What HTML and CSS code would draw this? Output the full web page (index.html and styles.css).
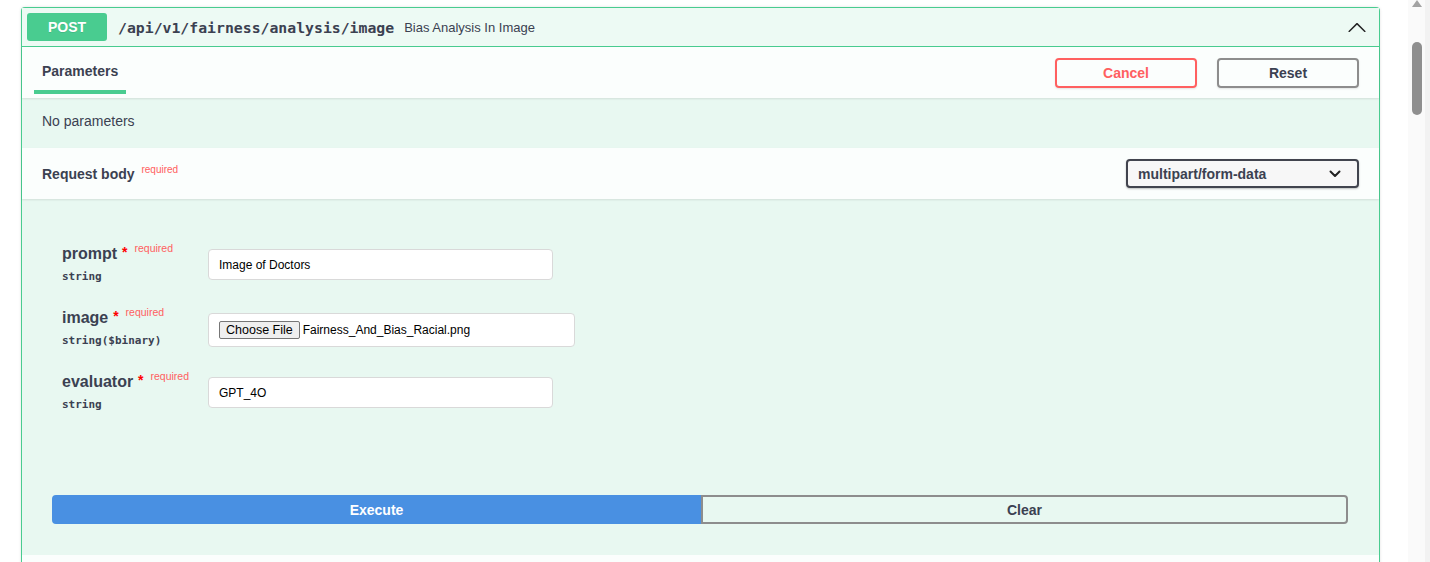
FILE: index.html
```html
<!DOCTYPE html>
<html>
<head>
<meta charset="utf-8">
<link rel="stylesheet" href="styles.css">
</head>
<body>
<div class="page">
  <div class="main">
    <div class="opblock">
      <div class="summary">
        <span class="method">POST</span>
        <span class="path">/api/v1/fairness/analysis/image</span>
        <span class="desc">Bias Analysis In Image</span>
        <svg class="arrow" width="20" height="20" viewBox="0 0 20 20"><path d="M17.418 14.908C17.69 15.176 18.127 15.176 18.397 14.908C18.667 14.64 18.668 14.207 18.397 13.939L10.489 6.109C10.219 5.841 9.782 5.841 9.51 6.109L1.602 13.939C1.332 14.207 1.332 14.64 1.602 14.908C1.873 15.176 2.311 15.176 2.581 14.908L10 7.767L17.418 14.908Z" fill="#222"/></svg>
      </div>
      <div class="section-header params-header">
        <div class="tab"><span class="tab-label">Parameters</span></div>
        <div class="btn-group">
          <button class="btn cancel">Cancel</button>
          <button class="btn reset">Reset</button>
        </div>
      </div>
      <div class="no-params">No parameters</div>
      <div class="section-header body-header">
        <div class="rb-title">Request body <sup class="req">required</sup></div>
        <div class="select">
          <span>multipart/form-data</span>
          <svg width="12" height="8" viewBox="0 0 12 8"><path d="M1.5 1.5 L6 6 L10.5 1.5" fill="none" stroke="#222" stroke-width="2" stroke-linecap="round" stroke-linejoin="round"/></svg>
        </div>
      </div>
      <div class="body-section">
        <div class="fields">
          <div class="field">
            <div class="label">
              <div class="name">prompt<span class="star"> *</span><sup class="req">required</sup></div>
              <div class="type">string</div>
            </div>
            <div class="input">Image of Doctors</div>
          </div>
          <div class="field">
            <div class="label">
              <div class="name">image<span class="star"> *</span><sup class="req">required</sup></div>
              <div class="type">string($binary)</div>
            </div>
            <div class="input file"><span class="choose">Choose File</span><span class="fname">Fairness_And_Bias_Racial.png</span></div>
          </div>
          <div class="field">
            <div class="label">
              <div class="name">evaluator<span class="star"> *</span><sup class="req">required</sup></div>
              <div class="type">string</div>
            </div>
            <div class="input">GPT_4O</div>
          </div>
        </div>
        <div class="exec-row">
          <button class="execute">Execute</button>
          <button class="clear">Clear</button>
        </div>
      </div>
      <div class="bottom"></div>
    </div>
  </div>
  <div class="scrollbar">
    <div class="up"></div>
    <div class="thumb"></div>
  </div>
</div>
</body>
</html>
```
FILE: styles.css
```css
* { box-sizing: border-box; }
html, body { margin: 0; padding: 0; background: #fff; }
body {
  font-family: "Liberation Sans", Arial, sans-serif;
  color: #3b4151;
  width: 1430px;
  height: 562px;
  overflow: hidden;
}
.page { display: flex; height: 562px; }
.main { width: 1408px; padding: 7px 0 0 21px; }
.opblock {
  width: 1359px;
  border: 1px solid #49cc90;
  border-bottom: none;
  border-radius: 4px 4px 0 0;
  background: #e8f8f1;
  box-shadow: 0 0 3px rgba(0,0,0,.12);
}
.summary {
  display: flex;
  align-items: center;
  height: 39px;
  padding: 0 5px;
  border-bottom: 1px solid #49cc90;
  background: #edfaf4;
}
.method {
  width: 80px;
  height: 28px;
  background: #49cc90;
  border-radius: 3px;
  color: #fff;
  font-weight: bold;
  font-size: 14px;
  display: flex;
  align-items: center;
  justify-content: center;
  text-shadow: 0 1px 0 rgba(0,0,0,.1);
}
.path {
  margin-left: 11px;
  font-family: "DejaVu Sans Mono", monospace;
  font-weight: bold;
  font-size: 14.8px;
  color: #3b4151;
}
.desc { margin-left: 10px; font-size: 13px; color: #3b4151; }
.arrow { margin-left: auto; margin-right: 7px; }
.section-header {
  display: flex;
  align-items: center;
  justify-content: space-between;
  background: #fbfefd;
  box-shadow: 0 1px 2px rgba(0,0,0,.1);
  padding: 0 20px;
  position: relative;
}
.params-header { height: 51px; }
.tab { display: flex; align-items: center; position: relative; margin-bottom: 3px; }
.tab-label { font-weight: bold; font-size: 14px; position: relative; }
.tab-label::after {
  content: "";
  position: absolute;
  left: -8px;
  right: -8px;
  bottom: -15px;
  height: 4px;
  background: #49cc90;
}
.btn-group { display: flex; gap: 20px; }
.btn {
  width: 142px;
  height: 30px;
  background: transparent;
  font-family: "Liberation Sans", Arial, sans-serif;
  font-weight: bold;
  font-size: 14px;
  border-radius: 4px;
  box-shadow: 0 1px 2px rgba(0,0,0,.1);
  padding: 0;
}
.cancel { border: 2px solid #ff6060; color: #ff6060; }
.reset { border: 2px solid #8d8d8d; color: #3b4151; }
.no-params {
  height: 50px;
  padding: 0 20px 5px;
  display: flex;
  align-items: center;
  font-size: 14px;
  color: #3b4151;
}
.body-header { height: 51px; }
.rb-title { font-weight: bold; font-size: 14px; padding-top: 1px; }
.req {
  color: #ff6060;
  font-size: 10px;
  font-weight: normal;
  vertical-align: top;
  position: relative;
  top: -2px;
  margin-left: 3px;
}
.select {
  width: 233px;
  height: 29px;
  border: 2px solid #41444e;
  border-radius: 4px;
  background: #f7f7f7;
  box-shadow: 0 1px 2px rgba(0,0,0,.25);
  display: flex;
  align-items: center;
  justify-content: space-between;
  padding: 0 16px 0 10px;
  font-weight: bold;
  font-size: 14px;
}
.body-section { padding: 46px 30px 31px; }
.fields { padding-left: 10px; display: flex; flex-direction: column; }
.field { display: flex; height: 64px; }
.label { width: 146px; }
.name { font-weight: bold; font-size: 16px; color: #3b4151; }
.star { color: #ff0000; font-size: 14px; vertical-align: top; position: relative; top: -1px; margin-right: 2px; margin-left: 1px; }
.name .req { margin-left: 5px; top: -3px; font-size: 10.5px; }
.type {
  font-family: "DejaVu Sans Mono", monospace;
  font-size: 11px;
  font-weight: bold;
  margin-top: 7px;
  color: #3b4151;
}
.input {
  width: 345px;
  height: 31px;
  margin-top: 4px;
  background: #fff;
  border: 1px solid #d9d9d9;
  border-radius: 4px;
  padding: 0 10px;
  display: flex;
  align-items: center;
  font-size: 12px;
  color: #000;
}
.input.file { width: 367px; height: 34px; }
.choose {
  background: #efefef;
  border: 1px solid #767676;
  border-radius: 2px;
  font-size: 12.5px;
  padding: 1px 6px;
  color: #000;
  margin-right: 3px;
}
.fname { font-size: 12px; }
.exec-row { display: flex; margin-top: 58px; }
.execute {
  width: 649px;
  height: 29px;
  background: #4990e2;
  border: 2px solid #4990e2;
  border-radius: 4px 0 0 4px;
  color: #fff;
  font-family: "Liberation Sans", Arial, sans-serif;
  font-weight: bold;
  font-size: 14px;
}
.clear {
  width: 647px;
  height: 29px;
  background: transparent;
  border: 2px solid #8d8d8d;
  border-radius: 0 4px 4px 0;
  color: #3b4151;
  font-family: "Liberation Sans", Arial, sans-serif;
  font-weight: bold;
  font-size: 14px;
}
.bottom { height: 20px; background: #fbfefd; }
.scrollbar {
  width: 22px;
  height: 562px;
  background: linear-gradient(to right, #fafafa 0, #fafafa 17px, #f2f2f2 17px);
  position: relative;
}
.up {
  position: absolute;
  left: 4px;
  top: 0;
  width: 0; height: 0;
  border-left: 5px solid transparent;
  border-right: 5px solid transparent;
  border-bottom: 7px solid #a3a3a3;
}
.thumb {
  position: absolute;
  left: 4px;
  top: 42px;
  width: 10px;
  height: 73px;
  border-radius: 5px;
  background: #8f8f8f;
}
```
